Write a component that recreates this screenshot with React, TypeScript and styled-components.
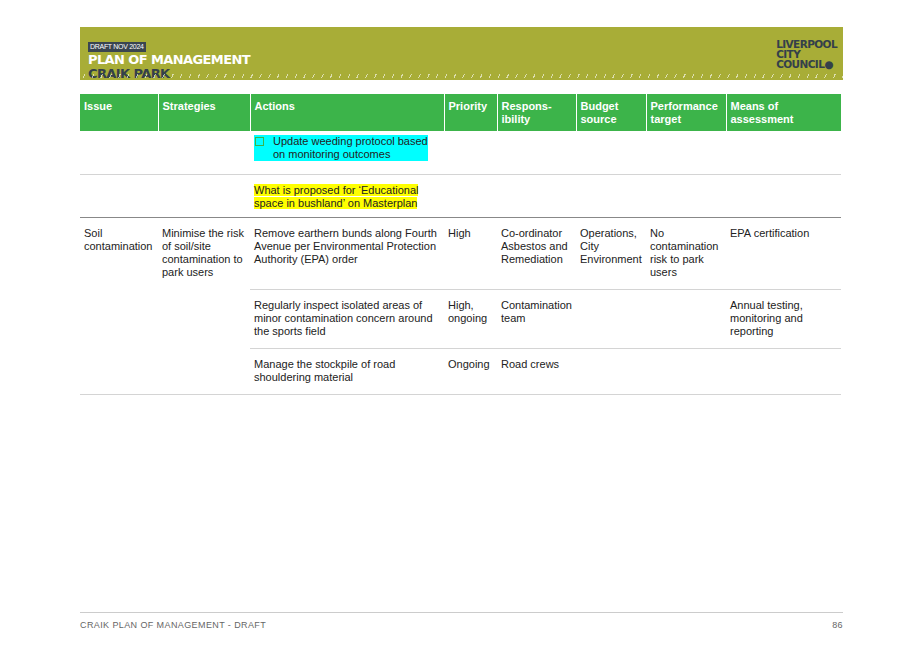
import React from 'react';
import styled, { createGlobalStyle } from 'styled-components';

const Global = createGlobalStyle`
  body { margin: 0; background: #fff; font-family: "Liberation Sans", Arial, sans-serif; }
`;

const Page = styled.div`
  width: 917px;
  height: 648px;
  box-sizing: border-box;
  padding: 27px 74px 0 80px;
  display: flex;
  flex-direction: column;
`;

const Banner = styled.header`
  height: 53px;
  background: #a8ad37;
  display: flex;
  justify-content: space-between;
  padding: 8px 6px 0 8px;
  box-sizing: border-box;
  position: relative;
  &::after {
    content: '';
    position: absolute;
    left: 0; right: 0; bottom: 2px; height: 4px;
    background: repeating-linear-gradient(115deg, transparent 0 4px, rgba(255,255,255,0.6) 4px 5px, transparent 5px 8px);
  }
`;

const Draft = styled.span`
  display: inline-block;
  background: #3a4550;
  color: #fff;
  font-size: 7px;
  line-height: 8px;
  padding: 1px 2px;
  letter-spacing: -0.3px;
`;

const Title = styled.div<{ dark?: boolean }>`
  font-family: "DejaVu Sans", sans-serif;
  font-weight: bold;
  font-size: 13px;
  line-height: 14px;
  letter-spacing: -0.6px;
  color: ${p => (p.dark ? '#34404a' : '#fff')};
`;

const Logo = styled.div`
  font-family: "DejaVu Sans", sans-serif;
  font-weight: bold;
  font-size: 10.5px;
  line-height: 10px;
  letter-spacing: -0.6px;
  color: #34404a;
  padding-top: 4px;
`;

const Table = styled.table`
  margin-top: 14px;
  width: 761px;
  table-layout: fixed;
  border-collapse: collapse;
  font-size: 11px;
  color: #222;
  line-height: 13px;
`;

const Th = styled.th<{ w: number }>`
  width: ${p => p.w}px;
  box-sizing: border-box;
  background: #3cb44a;
  color: #fff;
  text-align: left;
  vertical-align: top;
  font-weight: bold;
  padding: 6px 4px 3px 4px;
  height: 37px;
  border-left: 1px solid #fff;
  &:first-child { border-left: none; }
`;

const Td = styled.td<{ line?: string }>`
  vertical-align: top;
  padding: 9px 4px 10px 4px;
  border-bottom: 1px solid ${p => p.line || '#d4d4d4'};
`;

const Cyan = styled.span`
  background: #00ffff;
  display: inline-block;
  padding-left: 19px;
  position: relative;
  &::before {
    content: '';
    position: absolute;
    left: 1px; top: 2px;
    width: 7px; height: 7px;
    border: 1px solid #3cb44a;
  }
`;

const Yellow = styled.span`
  background: #ffff00;
`;

const Footer = styled.footer`
  margin-top: auto;
  margin-bottom: 18px;
  border-top: 1px solid #ccc;
  padding-top: 7px;
  display: flex;
  justify-content: space-between;
  font-size: 9px;
  color: #666;
  letter-spacing: 0.4px;
`;

const cols = [
  ['Issue', 78], ['Strategies', 92], ['Actions', 194], ['Priority', 53],
  ['Respons-\nibility', 79], ['Budget\nsource', 70], ['Performance\ntarget', 80], ['Means of\nassessment', 115],
] as const;

const E = () => <Td />;

export default function App() {
  return (
    <Page>
      <Global />
      <Banner>
        <div>
          <Draft>DRAFT NOV 2024</Draft>
          <Title>PLAN OF MANAGEMENT</Title>
          <Title dark>CRAIK PARK</Title>
        </div>
        <Logo>LIVERPOOL<br />CITY<br />COUNCIL●</Logo>
      </Banner>
      <Table>
        <thead>
          <tr>
            {cols.map(([t, w]) => (
              <Th key={t} w={w}>{t.split('\n').map((s, i) => <div key={i}>{s}</div>)}</Th>
            ))}
          </tr>
        </thead>
        <tbody>
          <tr>
            <E /><E />
            <Td style={{ padding: '4px 4px 13px 4px' }}><Cyan>Update weeding protocol based<br />on monitoring outcomes</Cyan></Td>
            <E /><E /><E /><E /><E />
          </tr>
          <tr>
            <Td line="#888" /><Td line="#888" />
            <Td line="#888" style={{ paddingBottom: '7px' }}><Yellow>What is proposed for ‘Educational<br />space in bushland’ on Masterplan</Yellow></Td>
            <Td line="#888" /><Td line="#888" /><Td line="#888" /><Td line="#888" /><Td line="#888" />
          </tr>
          <tr>
            <Td rowSpan={3}>Soil<br />contamination</Td>
            <Td rowSpan={3}>Minimise the risk<br />of soil/site<br />contamination to<br />park users</Td>
            <Td>Remove earthern bunds along Fourth Avenue per Environmental Protection Authority (EPA) order</Td>
            <Td>High</Td>
            <Td>Co-ordinator<br />Asbestos and<br />Remediation</Td>
            <Td>Operations,<br />City<br />Environment</Td>
            <Td>No<br />contamination<br />risk to park<br />users</Td>
            <Td>EPA certification</Td>
          </tr>
          <tr>
            <Td>Regularly inspect isolated areas of minor contamination concern around the sports field</Td>
            <Td>High,<br />ongoing</Td>
            <Td>Contamination<br />team</Td>
            <E /><E />
            <Td>Annual testing,<br />monitoring and<br />reporting</Td>
          </tr>
          <tr>
            <Td>Manage the stockpile of road<br />shouldering material</Td>
            <Td>Ongoing</Td>
            <Td>Road crews</Td>
            <E /><E /><E />
          </tr>
        </tbody>
      </Table>
      <Footer>
        <span>CRAIK PLAN OF MANAGEMENT - DRAFT</span>
        <span>86</span>
      </Footer>
    </Page>
  );
}
